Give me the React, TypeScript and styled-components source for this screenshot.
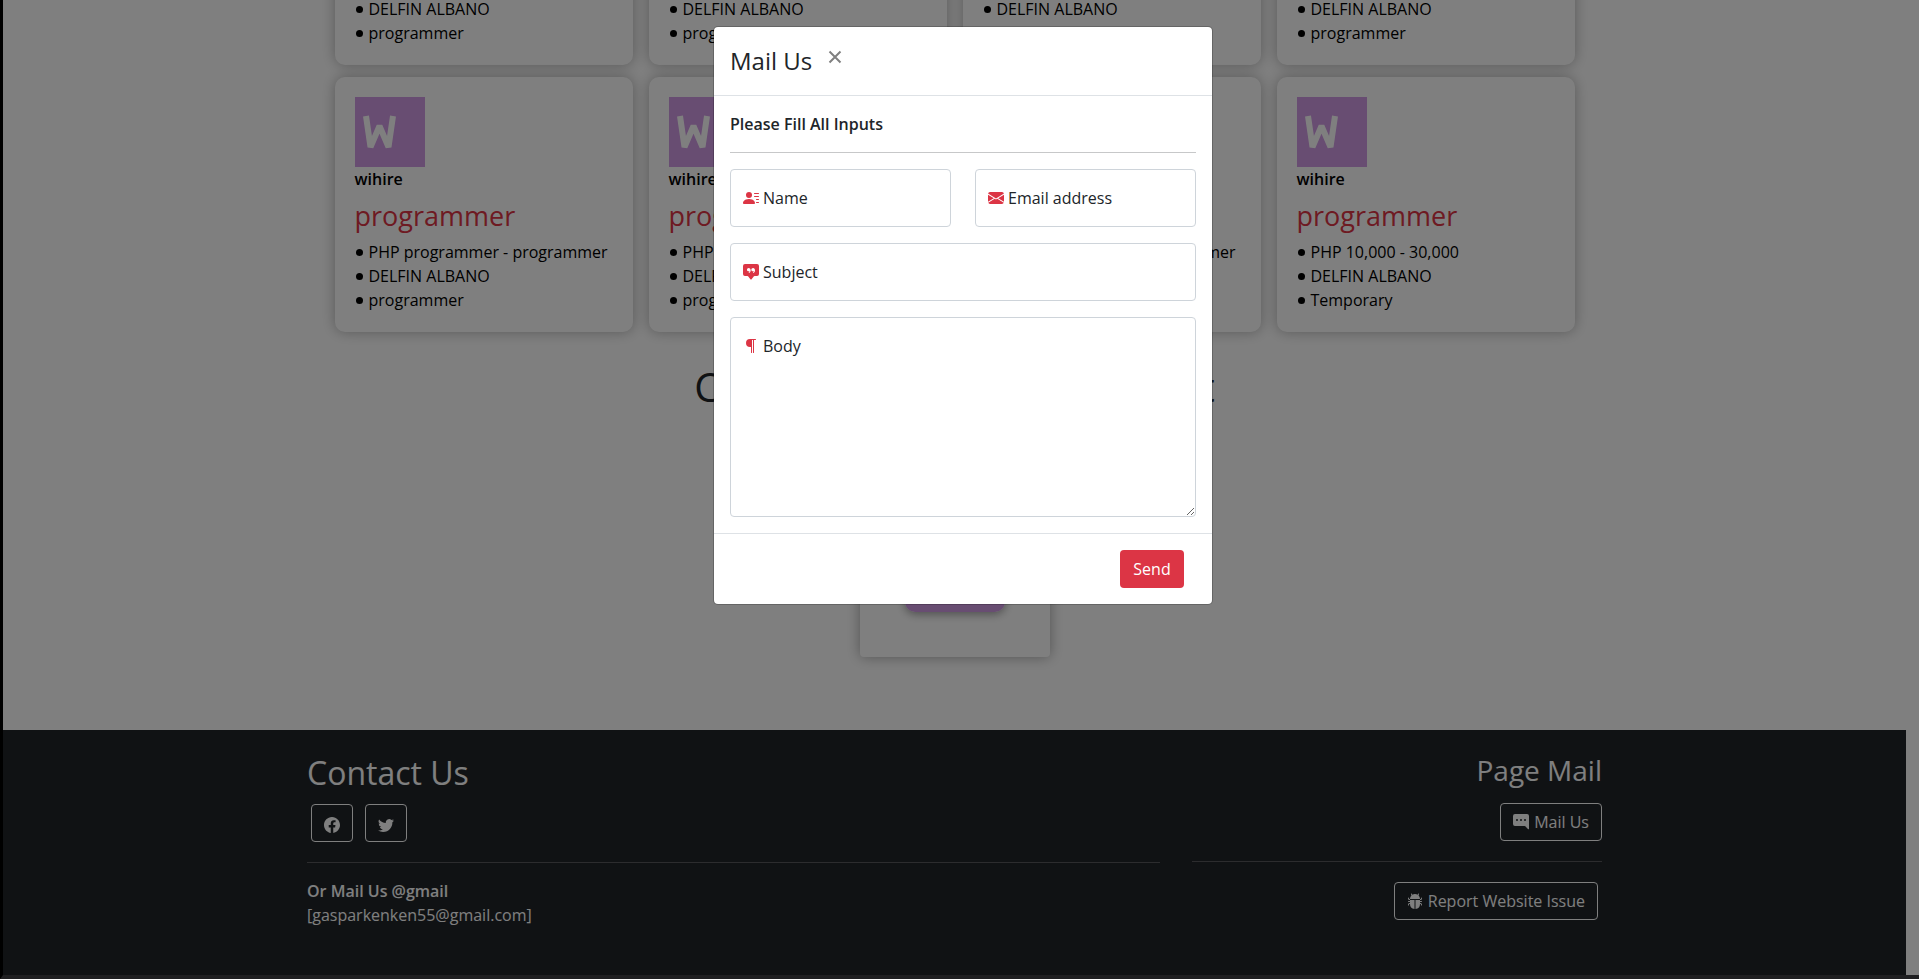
import React from 'react';
import styled, { createGlobalStyle } from 'styled-components';
import {
  BsBugFill,
  BsChatRightDotsFill,
  BsChatSquareQuoteFill,
  BsEnvelopeFill,
  BsFacebook,
  BsParagraph,
  BsPersonLinesFill,
  BsTwitter,
} from 'react-icons/bs';

const GlobalStyle = createGlobalStyle`
  *, *::before, *::after { box-sizing: border-box; }
  body {
    margin: 0;
    background: #000;
    color: #212529;
    font: 400 16px/24px "Open Sans", "Noto Sans", sans-serif;
  }
  button, input, textarea { font: inherit; }
  h1, h2, h3, h4, p, ul, hr { margin: 0; }
`;

const Frame = styled.div`
  position: relative;
  display: flex;
  flex-direction: column;
  justify-content: flex-end;
  height: 100vh;
  overflow: hidden;
  border-left: 3px solid #000;
  border-bottom: 4px solid #1f1f21;
  background: #fff;
`;

const Page = styled.div`
  flex: none;
  padding-right: 13px;
`;

const CardGrid = styled.ul`
  display: grid;
  grid-template-columns: repeat(4, 1fr);
  gap: 12px 16px;
  max-width: 1240px;
  margin: 0 auto;
  padding: 0;
  list-style: none;
`;

const JobCard = styled.li`
  padding: 20px;
  border-radius: 10px;
  background: #fff;
  color: #000;
  box-shadow: 0 0 14px rgba(0, 0, 0, 0.3);
`;

const Logo = styled.svg`
  display: block;
  width: 70px;
  height: 70px;
`;

const Company = styled.p`
  font-weight: 600;
`;

const JobTitle = styled.h3`
  margin: 8px 0 7px;
  color: #dc3545;
  font-size: 27px;
  font-weight: 400;
  line-height: 34px;
`;

const Detail = styled.p`
  display: flex;
  align-items: center;
  gap: 6px;
  padding-left: 1px;

  &::before {
    content: '';
    width: 7px;
    height: 7px;
    border-radius: 50%;
    background: currentColor;
  }
`;

const SectionTitle = styled.h1`
  margin: 31px 0 48px;
  font-size: 40px;
  font-weight: 500;
  line-height: 48px;
  text-align: center;
`;

const Carousel = styled.section`
  display: flex;
  justify-content: center;
  margin-bottom: 73px;
`;

const CompanyCard = styled.div`
  display: flex;
  flex-direction: column;
  align-items: center;
  justify-content: flex-end;
  width: 190px;
  height: 198px;
  padding-bottom: 45px;
  border-radius: 4px;
  background: #fff;
  box-shadow: 0 0 14px rgba(0, 0, 0, 0.35);
`;

const CompanyLogo = styled(Logo)`
  width: 100px;
  height: 100px;
  border-radius: 10px;
  box-shadow: 0 2px 10px rgba(0, 0, 0, 0.4);
`;

const Footer = styled.footer`
  padding: 23px 0 48px;
  background: #212529;
  color: #fff;
`;

const FooterRow = styled.div`
  display: grid;
  grid-template-columns: 853fr 410fr;
  gap: 32px;
  max-width: 1295px;
  margin: 0 auto;
`;

const FooterColumn = styled.div<{ $end?: boolean }>`
  display: flex;
  flex-direction: column;
  align-items: ${(p) => (p.$end ? 'flex-end' : 'flex-start')};
`;

const FooterTitle = styled.h2<{ $small?: boolean }>`
  margin-bottom: ${(p) => (p.$small ? 16 : 12)}px;
  font-size: ${(p) => (p.$small ? 28 : 32)}px;
  font-weight: 400;
  line-height: ${(p) => (p.$small ? 34 : 39)}px;
`;

const Social = styled.div`
  display: flex;
  gap: 12px;
  padding-left: 4px;
`;

const OutlineButton = styled.button`
  display: flex;
  align-items: center;
  gap: 5px;
  height: 38px;
  padding: 0 12px;
  border: 1px solid #fff;
  border-radius: 4px;
  background: transparent;
  color: #fff;
`;

const SocialLink = styled.a`
  display: flex;
  align-items: center;
  justify-content: center;
  width: 42px;
  height: 38px;
  padding-top: 4px;
  border: 1px solid #fff;
  border-radius: 4px;
  color: #fff;
`;

const Rule = styled.hr<{ $footer?: boolean }>`
  width: 100%;
  height: 1px;
  margin: ${(p) => (p.$footer ? '20px 0 16px' : '16px 0')};
  border: 0;
  background: ${(p) => (p.$footer ? '#58595c' : '#c7c8c9')};
`;

const ReportSlot = styled.div`
  padding: 4px 4px 0 0;
`;

const FooterLabel = styled.p`
  font-weight: 600;
`;

const Backdrop = styled.div`
  position: absolute;
  inset: 0;
  background: rgba(0, 0, 0, 0.5);
`;

const Dialog = styled.section`
  position: absolute;
  top: 26px;
  left: 4px;
  right: 0;
  width: 500px;
  margin: 0 auto;
  border: 1px solid rgba(0, 0, 0, 0.2);
  border-radius: 5px;
  background: #fff;
  background-clip: padding-box;
`;

const DialogHeader = styled.header`
  display: flex;
  align-items: flex-start;
  gap: 12px;
  padding: 16px 16px 23px;
  border-bottom: 1px solid #dee2e6;
`;

const DialogTitle = styled.h2`
  height: 29px;
  font-size: 24px;
  font-weight: 400;
  line-height: 36px;
`;

const CloseButton = styled.button`
  display: flex;
  padding: 7px 4px;
  border: 0;
  background: transparent;
  color: #808080;
`;

const DialogBody = styled.div`
  padding: 16px;
`;

const Lead = styled.p`
  font-weight: 600;
`;

const Fields = styled.div`
  display: grid;
  grid-template-columns: 1fr 1fr;
  gap: 16px 24px;
`;

const Field = styled.div<{ $wide?: boolean }>`
  position: relative;
  display: flex;
  grid-column: ${(p) => (p.$wide ? '1 / -1' : 'auto')};
`;

const FieldLabel = styled.label`
  position: absolute;
  top: 17px;
  left: 13px;
  display: flex;
  align-items: center;
  gap: 4px;
  pointer-events: none;

  svg { color: #dc3545; }
`;

const TextInput = styled.input`
  width: 100%;
  height: 58px;
  padding: 16px 12px;
  border: 1px solid #ced4da;
  border-radius: 4px;
  background: #fff;
`;

const TextArea = styled.textarea`
  display: block;
  width: 100%;
  height: 200px;
  padding: 16px 12px;
  border: 1px solid #ced4da;
  border-radius: 4px;
  background: #fff;
  resize: vertical;
`;

const DialogFooter = styled.footer`
  display: flex;
  justify-content: flex-end;
  padding: 16px 28px 16px 16px;
  border-top: 1px solid #dee2e6;
`;

const SendButton = styled.button`
  width: 64px;
  height: 38px;
  padding: 0;
  border: 0;
  border-radius: 4px;
  background: #dc3545;
  color: #fff;
`;

const LogoArt = () => (
  <>
    <rect width="70" height="70" fill="#d09ae4" />
    <path
      d="M11 19 L15.5 50 L24.5 29 L33.5 50 L38 19"
      fill="none"
      stroke="#fff"
      strokeWidth="6"
      strokeLinejoin="bevel"
    />
  </>
);

const usual = ['PHP programmer - programmer', 'DELFIN ALBANO', 'programmer'];
const jobs = [
  usual, usual, usual, usual,
  usual, usual, usual,
  ['PHP 10,000 - 30,000', 'DELFIN ALBANO', 'Temporary'],
];

export default function App() {
  return (
    <>
      <GlobalStyle />
      <Frame>
        <Page>
          <CardGrid>
            {jobs.map((details, i) => (
              <JobCard key={i}>
                <Logo viewBox="0 0 70 70" role="img" aria-label="wihire logo"><LogoArt /></Logo>
                <Company>wihire</Company>
                <JobTitle>programmer</JobTitle>
                {details.map((d) => <Detail key={d}>{d}</Detail>)}
              </JobCard>
            ))}
          </CardGrid>
          <SectionTitle>Companies With Latest Post</SectionTitle>
          <Carousel>
            <CompanyCard>
              <CompanyLogo viewBox="0 0 70 70" role="img" aria-label="wihire logo"><LogoArt /></CompanyLogo>
            </CompanyCard>
          </Carousel>
          <Footer>
            <FooterRow>
              <FooterColumn>
                <FooterTitle>Contact Us</FooterTitle>
                <Social>
                  <SocialLink href="#facebook" aria-label="Facebook"><BsFacebook /></SocialLink>
                  <SocialLink href="#twitter" aria-label="Twitter"><BsTwitter /></SocialLink>
                </Social>
                <Rule $footer />
                <FooterLabel>Or Mail Us @gmail</FooterLabel>
                <p>[gasparkenken55@gmail.com]</p>
              </FooterColumn>
              <FooterColumn $end>
                <FooterTitle $small>Page Mail</FooterTitle>
                <OutlineButton type="button"><BsChatRightDotsFill />Mail Us</OutlineButton>
                <Rule $footer />
                <ReportSlot>
                  <OutlineButton type="button"><BsBugFill />Report Website Issue</OutlineButton>
                </ReportSlot>
              </FooterColumn>
            </FooterRow>
          </Footer>
        </Page>
        <Backdrop />
        <Dialog role="dialog" aria-modal="true" aria-labelledby="mail-title">
          <DialogHeader>
            <DialogTitle id="mail-title">Mail Us</DialogTitle>
            <CloseButton type="button" aria-label="Close">
              <svg width="14" height="14" viewBox="0 0 14 14" fill="none" stroke="currentColor" strokeWidth="2">
                <path d="M1.5 1.5 L12.5 12.5 M12.5 1.5 L1.5 12.5" />
              </svg>
            </CloseButton>
          </DialogHeader>
          <DialogBody>
            <Lead>Please Fill All Inputs</Lead>
            <Rule />
            <Fields>
              <Field>
                <TextInput id="name" type="text" />
                <FieldLabel htmlFor="name"><BsPersonLinesFill />Name</FieldLabel>
              </Field>
              <Field>
                <TextInput id="email" type="email" />
                <FieldLabel htmlFor="email"><BsEnvelopeFill />Email address</FieldLabel>
              </Field>
              <Field $wide>
                <TextInput id="subject" type="text" />
                <FieldLabel htmlFor="subject"><BsChatSquareQuoteFill />Subject</FieldLabel>
              </Field>
              <Field $wide>
                <TextArea id="body" />
                <FieldLabel htmlFor="body"><BsParagraph />Body</FieldLabel>
              </Field>
            </Fields>
          </DialogBody>
          <DialogFooter>
            <SendButton type="submit">Send</SendButton>
          </DialogFooter>
        </Dialog>
      </Frame>
    </>
  );
}
